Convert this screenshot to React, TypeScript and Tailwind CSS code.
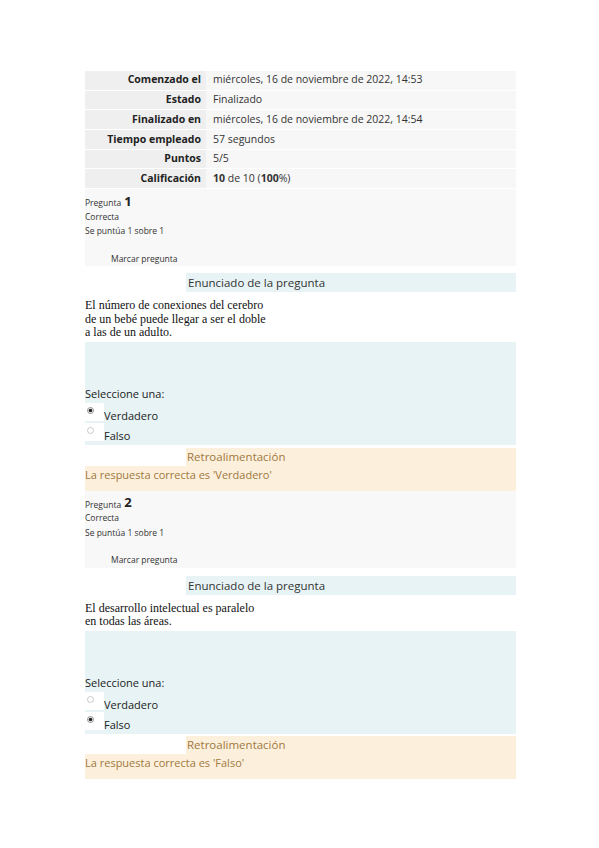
import React from 'react'

const SANS = { fontFamily: '"Open Sans", "Noto Sans", sans-serif' }
const SERIF = { fontFamily: '"Liberation Serif", "Times New Roman", serif' }

const RESUMEN = [
  { label: 'Comenzado el', value: <>miércoles, 16 de noviembre de 2022, 14:53</> },
  { label: 'Estado', value: <>Finalizado</> },
  { label: 'Finalizado en', value: <>miércoles, 16 de noviembre de 2022, 14:54</> },
  { label: 'Tiempo empleado', value: <>57 segundos</> },
  { label: 'Puntos', value: <>5/5</> },
  {
    label: 'Calificación',
    value: (
      <>
        <b className="font-bold">10</b>&nbsp;de 10 (<b className="font-bold">100</b>%)
      </>
    ),
  },
]

const PREGUNTAS = [
  {
    n: 1,
    texto: ['El número de conexiones del cerebro', 'de un bebé puede llegar a ser el doble', 'a las de un adulto.'],
    elegida: 'Verdadero',
    correcta: 'Verdadero',
  },
  {
    n: 2,
    texto: ['El desarrollo intelectual es paralelo', 'en todas las áreas.'],
    elegida: 'Falso',
    correcta: 'Falso',
  },
]

function Radio({ checked }: { checked: boolean }) {
  return (
    <svg width="7" height="7" viewBox="0 0 7 7" className="block">
      <circle cx="3.5" cy="3.5" r="3" fill="#fff" stroke={checked ? '#777' : '#bbb'} strokeWidth="0.8" />
      {checked && <circle cx="3.5" cy="3.5" r="1.8" fill="#222" />}
    </svg>
  )
}

function Pregunta({ p, first }: { p: (typeof PREGUNTAS)[number]; first: boolean }) {
  return (
    <div className="flex flex-col">
      {/* info */}
      <div className="h-[77px] bg-[#f8f8f8] flex flex-col text-[8.5px] text-[#333] leading-none pt-[5px]">
        <div className="h-[14px] flex items-end">
          <span>Pregunta</span>
          <span className="ml-[3px] text-[13px] font-bold text-[#222] leading-none">{p.n}</span>
        </div>
        <div className="h-[15px] flex items-center mt-[2px]">Correcta</div>
        <div className="h-[14px] flex items-center">Se puntúa 1 sobre 1</div>
        <div className="h-[14px] flex items-center pl-[26px] mt-[14px]">Marcar pregunta</div>
      </div>

      <div className={first ? 'h-[7px]' : 'h-[8px]'} />

      {/* enunciado */}
      <div className="ml-[101px] h-[19px] bg-[#e7f3f5] flex items-center pl-[2px] text-[11.5px] text-[#333]">
        Enunciado de la pregunta
      </div>

      <div className="pt-[7px] pb-[2px] text-[12px] leading-[13.5px] text-[#111]" style={SERIF}>
        {p.texto.map((l) => (
          <div key={l}>{l}</div>
        ))}
      </div>

      {/* respuesta */}
      <div className="h-[103px] bg-[#e7f3f5] pt-[43px] text-[11px] text-[#222]">
        <div className="h-[20px] flex items-center">Seleccione una:</div>
        {['Verdadero', 'Falso'].map((op) => (
          <div key={op} className="h-[20px] flex items-start">
            <div className="w-[19px] h-[18px] bg-white pl-[2px] pt-[4px] -mt-[2px]">
              <Radio checked={p.elegida === op} />
            </div>
            <span className="mt-[5px] leading-none">{op}</span>
          </div>
        ))}
      </div>

      <div className={first ? 'h-[3px]' : 'h-[2px]'} />

      {/* retroalimentación */}
      <div className="ml-[101px] h-[18px] bg-[#fcefdc] flex items-center pl-[1px] text-[11.5px] text-[#a0793d]">
        Retroalimentación
      </div>
      <div className="h-[25px] bg-[#fcefdc] flex items-start pt-[1px] text-[11px] text-[#a0793d]">
        La respuesta correcta es '{p.correcta}'
      </div>
    </div>
  )
}

export default function App() {
  return (
    <div className="w-[599px] min-h-[848px] bg-white" style={SANS}>
      <div className="ml-[85px] w-[431px] pt-[71px] flex flex-col">
        {/* resumen del intento */}
        <div className="flex flex-col text-[10.5px] text-[#333]">
          {RESUMEN.map((r) => (
            <div key={r.label} className="flex h-[19.7px] border-b border-white">
              <div className="w-[121px] bg-[#efefef] flex items-center justify-end pr-[5px] font-bold text-[#222]">
                {r.label}
              </div>
              <div className="flex-1 bg-[#f7f7f7] flex items-center pl-[7px]">{r.value}</div>
            </div>
          ))}
        </div>

        {PREGUNTAS.map((p, i) => (
          <Pregunta key={p.n} p={p} first={i === 0} />
        ))}
      </div>
    </div>
  )
}
